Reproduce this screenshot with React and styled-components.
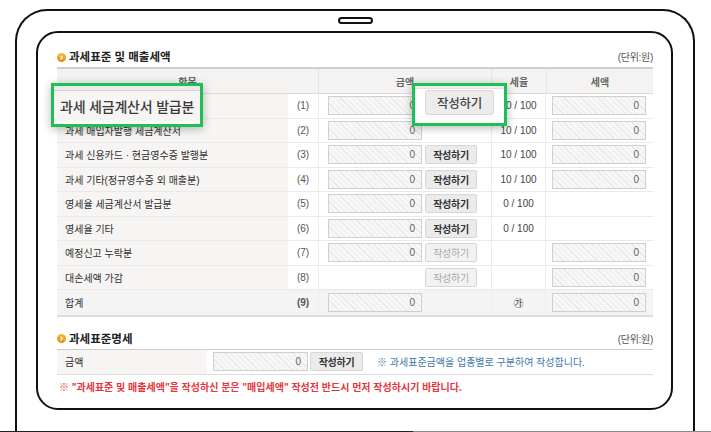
import React from "react";
import styled, { createGlobalStyle } from "styled-components";

const GlobalStyle = createGlobalStyle`
  * { box-sizing: border-box; }
  body {
    margin: 0;
    background: #fff;
    font-family: "Liberation Sans", "Noto Sans CJK KR", sans-serif;
    color: #333;
  }
`;

// 전체 화면 (태블릿 프레임 + 하단 라인)
const Page = styled.div`
  width: 711px;
  height: 432px;
  overflow: hidden;
  display: flex;
  flex-direction: column;
`;

const Device = styled.div`
  flex: 1;
  margin: 9px 16px 0 15px;
  border: 2px solid #111;
  border-bottom: none;
  border-radius: 32px 32px 0 0;
  display: flex;
  flex-direction: column;
`;

const Speaker = styled.div`
  align-self: center;
  width: 35px;
  height: 7px;
  margin-top: 6px;
  border: 2px solid #111;
  border-radius: 4px;
`;

const BottomEdge = styled.div`
  height: 1px;
  background: linear-gradient(to right, #222 0 413px, #8a8a8a 413px);
`;

const Screen = styled.div`
  position: relative;
  width: 637px;
  height: 379px;
  margin: 7px 0 0 19px;
  border: 2px solid #111;
  border-radius: 22px;
  padding: 14px 18px 0 19px;
`;

const SectionHead = styled.div`
  display: flex;
  align-items: center;
  justify-content: space-between;
  height: 20px;
  margin-top: ${(p) => p.$gap || 0}px;
`;

const SectionTitle = styled.h3`
  display: flex;
  align-items: center;
  gap: 3px;
  margin: 0;
  font-size: 11.5px;
  font-weight: 700;
  color: #222;
  line-height: 14px;
`;

const Unit = styled.span`
  font-size: 10px;
  letter-spacing: -0.3px;
  color: #555;
  line-height: 14px;
  margin-top: 2px;
`;

const COLS = "231px 30px 173px 55px 107px";

const TaxTable = styled.div`
  border-top: 2px solid #cfcfcf;
  border-bottom: 2px solid #dddddd;
`;

const HeadRow = styled.div`
  display: grid;
  grid-template-columns: ${COLS};
  height: 25px;
  background: #f4f3f1;
  border-bottom: 1px solid #dcdcdc;
`;

const HeadCell = styled.div`
  grid-column: span ${(p) => p.$span || 1};
  display: flex;
  align-items: center;
  justify-content: center;
  font-size: 10px;
  font-weight: 700;
  color: #666;
  border-left: ${(p) => (p.$first ? "none" : "1px solid #e6e6e6")};
`;

const Row = styled.div`
  display: grid;
  grid-template-columns: ${COLS};
  height: 24.5px;
  background: ${(p) => (p.$total ? "#f4f4f4" : "#fff")};
  border-bottom: ${(p) => (p.$last ? "none" : "1px solid #e9e9e9")};
`;

const LabelCell = styled.div`
  display: flex;
  align-items: center;
  padding-left: 8px;
  background: ${(p) => (p.$total ? "transparent" : "#f6f5f3")};
  font-size: 10px;
  color: #2f2f2f;
  white-space: nowrap;
`;

const NumCell = styled.div`
  display: flex;
  align-items: center;
  justify-content: center;
  font-size: 10px;
  color: #555;
  font-weight: ${(p) => (p.$total ? 700 : 400)};
`;

const AmountCell = styled.div`
  display: flex;
  align-items: center;
  gap: 3px;
  padding-left: ${(p) => (p.$empty ? 106 : 9)}px;
  border-left: 1px solid #ececec;
`;

const RateCell = styled.div`
  display: flex;
  align-items: center;
  justify-content: center;
  font-size: 10px;
  color: #444;
  border-left: 1px solid #ececec;
  border-right: 1px solid #ececec;
`;

const TaxCell = styled.div`
  display: flex;
  align-items: center;
  padding-left: 6px;
`;

const AmountBox = styled.div`
  width: ${(p) => p.$w || 94}px;
  height: 19px;
  border: 1px solid #cfcfcf;
  background: repeating-linear-gradient(45deg, #f7f7f7 0 3px, #e9e9e9 3px 4px);
  display: flex;
  align-items: center;
  justify-content: flex-end;
  padding-right: 6px;
  font-size: 10px;
  color: #666;
`;

const WriteButton = styled.button`
  width: ${(p) => p.$w || 52}px;
  height: 19px;
  padding: 0;
  border: 1px solid #d6d6d6;
  border-radius: 2px;
  background: ${(p) => (p.disabled ? "#f2f2f2" : "#ebebeb")};
  font-family: inherit;
  font-size: 10px;
  font-weight: ${(p) => (p.disabled ? 400 : 700)};
  letter-spacing: -0.3px;
  color: ${(p) => (p.disabled ? "#aaa" : "#333")};
  cursor: pointer;
`;

const SpecTable = styled.div`
  border-top: 1px solid #cccccc;
  border-bottom: 1px solid #dddddd;
  display: flex;
  align-items: center;
  height: 26px;
`;

const SpecLabel = styled.div`
  align-self: stretch;
  width: 150px;
  display: flex;
  align-items: center;
  padding-left: 8px;
  background: #f6f5f3;
  font-size: 10px;
  color: #2f2f2f;
`;

const SpecBody = styled.div`
  display: flex;
  align-items: center;
  gap: 2px;
  padding-left: 6px;
`;

const SpecNote = styled.span`
  margin-left: 14px;
  font-size: 10px;
  color: #3f78a8;
`;

const WarnNote = styled.p`
  margin: 5px 0 0 2px;
  font-size: 10px;
  line-height: 16px;
  font-weight: 700;
  color: #e5353b;
`;

// 강조 확대 박스
const Callout = styled.div`
  position: absolute;
  left: ${(p) => p.$x}px;
  top: ${(p) => p.$y}px;
  width: ${(p) => p.$w}px;
  height: ${(p) => p.$h}px;
  border: 3px solid #1fbf58;
  box-shadow: 0 2px 9px rgba(0, 0, 0, 0.28);
  background: ${(p) =>
    p.$label
      ? "linear-gradient(#ececec 0 4px, #d2d2d2 4px 5px, #f6f5f3 5px 35px, #fbfbfb 35px)"
      : "linear-gradient(#f1f1f1 0 2px, #e2e2e2 2px 3px, #fff 3px)"};
  display: flex;
  align-items: ${(p) => (p.$label ? "center" : "flex-start")};
  padding: ${(p) => (p.$label ? "4px 0 0 6px" : "4px 0 0 10px")};
`;

const CalloutText = styled.span`
  font-size: 14px;
  font-weight: 500;
  letter-spacing: -0.2px;
  color: #3a3a3a;
  line-height: 18px;
`;

const BigButton = styled.button`
  width: 69px;
  height: 25px;
  padding: 0;
  border: 1px solid #d8d8d8;
  border-radius: 3px;
  background: #ececec;
  font-family: inherit;
  font-size: 12.5px;
  font-weight: 500;
  letter-spacing: -0.3px;
  color: #444;
`;

const Bullet = () => (
  <svg width="9" height="9" viewBox="0 0 9 9">
    <defs>
      <linearGradient id="bg" x1="0" y1="0" x2="0" y2="1">
        <stop offset="0" stopColor="#fbb83a" />
        <stop offset="1" stopColor="#ec8a12" />
      </linearGradient>
    </defs>
    <circle cx="4.5" cy="4.5" r="4.5" fill="url(#bg)" />
    <path d="M3.6 2.6 L5.4 4.5 L3.6 6.4" fill="none" stroke="#fff" strokeWidth="1.3" />
  </svg>
);

const rows = [
  { label: "과세 세금계산서 발급분", no: "(1)", amount: true, btn: "on", rate: "10 / 100", tax: true },
  { label: "과세 매입자발행 세금계산서", no: "(2)", amount: true, btn: null, rate: "10 / 100", tax: true },
  { label: "과세 신용카드 · 현금영수증 발행분", no: "(3)", amount: true, btn: "on", rate: "10 / 100", tax: true },
  { label: "과세 기타(정규영수증 외 매출분)", no: "(4)", amount: true, btn: "on", rate: "10 / 100", tax: true },
  { label: "영세율 세금계산서 발급분", no: "(5)", amount: true, btn: "on", rate: "0 / 100", tax: false },
  { label: "영세율 기타", no: "(6)", amount: true, btn: "on", rate: "0 / 100", tax: false },
  { label: "예정신고 누락분", no: "(7)", amount: true, btn: "off", rate: "", tax: true },
  { label: "대손세액 가감", no: "(8)", amount: false, btn: "off", rate: "", tax: true },
  { label: "합계", no: "(9)", amount: true, btn: null, rate: "㉮", tax: true, total: true },
];

const App = () => {
  return (
    <>
      <GlobalStyle />
      <Page>
        <Device>
          <Speaker />
          <Screen>
            <SectionHead>
              <SectionTitle>
                <Bullet />
                과세표준 및 매출세액
              </SectionTitle>
              <Unit>(단위:원)</Unit>
            </SectionHead>
            <TaxTable>
              <HeadRow>
                <HeadCell $span={2} $first>
                  항목
                </HeadCell>
                <HeadCell>금액</HeadCell>
                <HeadCell>세율</HeadCell>
                <HeadCell>세액</HeadCell>
              </HeadRow>
              {rows.map((r, i) => (
                <Row key={r.no} $total={r.total} $last={i === rows.length - 1}>
                  <LabelCell $total={r.total}>{r.label}</LabelCell>
                  <NumCell $total={r.total}>{r.no}</NumCell>
                  <AmountCell $empty={!r.amount}>
                    {r.amount && <AmountBox>0</AmountBox>}
                    {r.btn && <WriteButton disabled={r.btn === "off"}>작성하기</WriteButton>}
                  </AmountCell>
                  <RateCell>{r.rate}</RateCell>
                  <TaxCell>{r.tax && <AmountBox>0</AmountBox>}</TaxCell>
                </Row>
              ))}
            </TaxTable>

            <SectionHead $gap={12}>
              <SectionTitle>
                <Bullet />
                과세표준명세
              </SectionTitle>
              <Unit>(단위:원)</Unit>
            </SectionHead>
            <SpecTable>
              <SpecLabel>금액</SpecLabel>
              <SpecBody>
                <AmountBox $w={95}>0</AmountBox>
                <WriteButton $w={53}>작성하기</WriteButton>
              </SpecBody>
              <SpecNote>※ 과세표준금액을 업종별로 구분하여 작성합니다.</SpecNote>
            </SpecTable>
            <WarnNote>
              ※ "과세표준 및 매출세액"을 작성하신 분은 "매입세액" 작성전 반드시 먼저 작성하시기 바랍니다.
            </WarnNote>

            <Callout $label $x={13} $y={50} $w={152} $h={44}>
              <CalloutText>과세 세금계산서 발급분</CalloutText>
            </Callout>
            <Callout $x={374} $y={50} $w={95} $h={43}>
              <BigButton>작성하기</BigButton>
            </Callout>
          </Screen>
        </Device>
        <BottomEdge />
      </Page>
    </>
  );
};

export default App;
